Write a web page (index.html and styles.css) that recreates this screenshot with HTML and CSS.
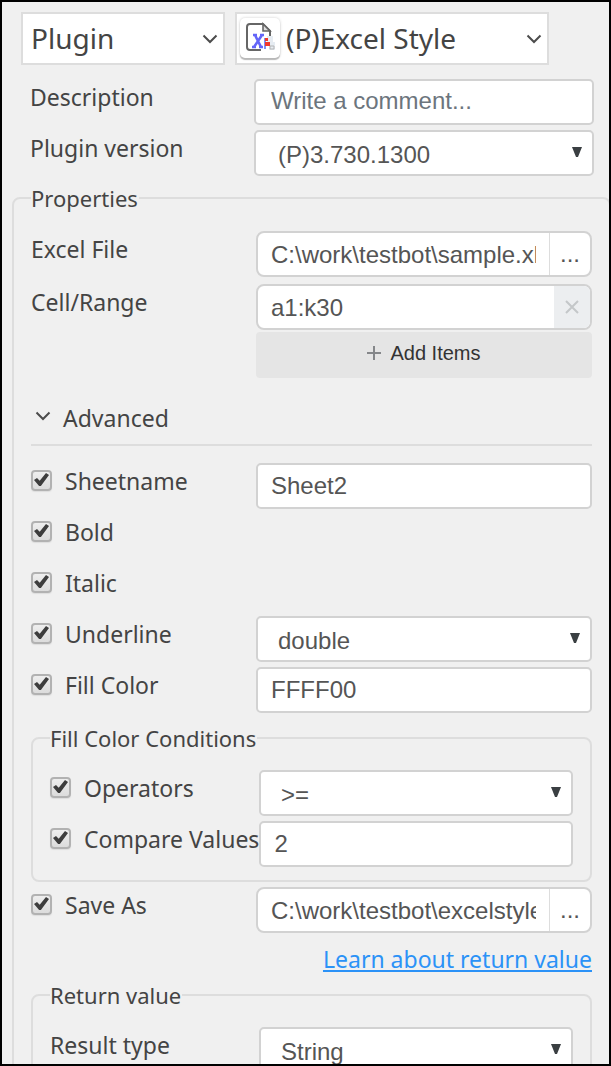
FILE: index.html
```html
<!DOCTYPE html>
<html lang="en">
<head>
<meta charset="utf-8">
<meta name="viewport" content="width=device-width, initial-scale=1">
<title>Excel Style plugin</title>
<link rel="stylesheet" href="styles.css">
</head>
<body>
<svg class="defs" aria-hidden="true">
  <symbol id="chevron" viewBox="0 0 16 10"><path d="M1.5 1.5 8 8l6.500-6.500" fill="none" stroke="#4c4c4c" stroke-width="2"/></symbol>
  <symbol id="triangle" viewBox="0 0 10 10"><path d="M0 0h10L6 10H4z" fill="#3a3f42"/></symbol>
</svg>
<main class="panel">
  <header class="picker">
    <div class="combo combo-type">
      <select class="combo-select" aria-label="Action type"><option>Plugin</option></select>
      <svg class="combo-chevron"><use href="#chevron"/></svg>
    </div>
    <div class="combo combo-plugin">
      <select class="combo-select combo-select-icon" aria-label="Plugin name"><option>(P)Excel Style</option></select>
      <span class="plugin-icon">
        <svg viewBox="0 0 30 30" width="30" height="30" aria-hidden="true">
          <path d="M16 28H5q-3 0-3-3V5q0-3 3-3h13l7 7v5" fill="none" stroke="#666" stroke-width="2"/>
          <path d="M18 2v7h7z" fill="#ddd" stroke="#666" stroke-width="1.6"/>
          <path d="M8 13h4M15 13h4M7 25h4M14 25h4M10 13l6 12M17 13 9 25" stroke="#6466f8" stroke-width="2.600" fill="none"/>
          <path d="M22 14h6v6h-6zM24 20h6v8h-6z" fill="#e6ecf2"/>
          <path d="M25 24h4v3h-4z" fill="none" stroke="#b4b4b4"/>
          <path d="M20 16v11" stroke="#7f90f5" stroke-width="2"/>
          <path d="M20 16h3v3h-3zM20 20h5v4h-5z" fill="#f0382c"/>
        </svg>
      </span>
      <svg class="combo-chevron"><use href="#chevron"/></svg>
    </div>
  </header>

  <form class="form">
    <div class="general">
      <div class="row">
        <label class="label" for="description">Description</label>
        <input class="field" id="description" type="text" placeholder="Write a comment...">
      </div>
      <div class="row">
        <label class="label" for="version">Plugin version</label>
        <div class="drop">
          <select class="field field-select" id="version"><option>(P)3.730.1300</option></select>
          <svg class="drop-arrow"><use href="#triangle"/></svg>
        </div>
      </div>
    </div>

    <fieldset class="group group-main">
      <legend class="legend">Properties</legend>
      <div class="row row-file">
        <label class="label" for="file">Excel File</label>
        <div class="joined">
          <input class="joined-input" id="file" type="text" value="C:\work\testbot\sample.xl">
          <button class="browse" type="button" aria-label="Browse Excel file">...</button>
        </div>
      </div>
      <div class="row">
        <label class="label" for="range">Cell/Range</label>
        <div class="stack">
          <div class="joined">
            <input class="joined-input" id="range" type="text" value="a1:k30">
            <button class="remove" type="button" aria-label="Remove item">
              <svg viewBox="0 0 14 14" width="14" height="14"><path d="M1 1l12 12M13 1 1 13" stroke="#c4c7c9" stroke-width="2"/></svg>
            </button>
          </div>
          <button class="add" type="button">
            <svg viewBox="0 0 14 14" width="14" height="14"><path d="M7 0v14M0 7h14" stroke="#85878a" stroke-width="2"/></svg>
            Add Items
          </button>
        </div>
      </div>

      <button class="advanced" type="button">
        <svg class="advanced-chevron"><use href="#chevron"/></svg>
        Advanced
      </button>

      <div class="row">
        <div class="check"><input class="box" id="c1" type="checkbox" checked><label for="c1">Sheetname</label></div>
        <input class="field" type="text" value="Sheet2" aria-label="Sheetname">
      </div>
      <div class="row">
        <div class="check"><input class="box" id="c2" type="checkbox" checked><label for="c2">Bold</label></div>
      </div>
      <div class="row">
        <div class="check"><input class="box" id="c3" type="checkbox" checked><label for="c3">Italic</label></div>
      </div>
      <div class="row">
        <div class="check"><input class="box" id="c4" type="checkbox" checked><label for="c4">Underline</label></div>
        <div class="drop">
          <select class="field field-select" aria-label="Underline"><option>double</option></select>
          <svg class="drop-arrow"><use href="#triangle"/></svg>
        </div>
      </div>
      <div class="row">
        <div class="check"><input class="box" id="c5" type="checkbox" checked><label for="c5">Fill Color</label></div>
        <input class="field" type="text" value="FFFF00" aria-label="Fill Color">
      </div>

      <fieldset class="group group-inner">
        <legend class="legend">Fill Color Conditions</legend>
        <div class="row">
          <div class="check"><input class="box" id="c6" type="checkbox" checked><label for="c6">Operators</label></div>
          <div class="drop">
            <select class="field field-select" aria-label="Operators"><option>&gt;=</option></select>
            <svg class="drop-arrow"><use href="#triangle"/></svg>
          </div>
        </div>
        <div class="row">
          <div class="check"><input class="box" id="c7" type="checkbox" checked><label for="c7">Compare Values</label></div>
          <input class="field" type="text" value="2" aria-label="Compare Values">
        </div>
      </fieldset>

      <div class="row">
        <div class="check"><input class="box" id="c8" type="checkbox" checked><label for="c8">Save As</label></div>
        <div class="joined">
          <input class="joined-input" type="text" value="C:\work\testbot\excelstyle" aria-label="Save As">
          <button class="browse" type="button" aria-label="Browse save location">...</button>
        </div>
      </div>

      <p class="help"><a class="help-link" href="#">Learn about return value</a></p>

      <fieldset class="group group-inner">
        <legend class="legend">Return value</legend>
        <div class="row">
          <label class="label" for="result">Result type</label>
          <div class="drop">
            <select class="field field-select" id="result"><option>String</option></select>
            <svg class="drop-arrow"><use href="#triangle"/></svg>
          </div>
        </div>
      </fieldset>
    </fieldset>
  </form>
</main>
</body>
</html>
```
FILE: styles.css
```css
* {
  box-sizing: border-box;
}

body {
  margin: 0;
  background: #f0f0f0;
  color: #444;
  font-family: "Noto Sans", "Open Sans", sans-serif;
  font-size: 23px;
  line-height: 30px;
}

.defs {
  display: none;
}

.panel {
  height: 100vh;
  overflow: hidden;
  border: 2px solid #000;
}

/* Header pickers */
.picker {
  display: flex;
  gap: 10px;
  padding: 10px 60px 0 19px;
}

.combo {
  position: relative;
}

.combo-type {
  flex: 204;
}

.combo-plugin {
  flex: 314;
}

.combo-select {
  appearance: none;
  display: block;
  width: 100%;
  height: 53px;
  padding: 0 36px 2px 8px;
  border: 2px solid #ddd;
  border-radius: 0;
  background: #fff;
  color: #444;
  font-family: inherit;
  font-size: 28px;
}

.combo-select-icon {
  padding-left: 49px;
}

.combo-chevron {
  position: absolute;
  top: 22px;
  right: 7px;
  width: 16px;
  height: 10px;
  pointer-events: none;
}

.plugin-icon {
  position: absolute;
  top: 6px;
  left: 5px;
  display: flex;
  padding: 4px 5px 6px;
  border-radius: 5px;
  background: #fff;
  box-shadow: 0 2px 1px #b8b8b8, 0 0 3px #ccc;
  pointer-events: none;
}

/* Form rows */
.general {
  padding: 14px 15px 0 28px;
}

.row {
  display: flex;
  align-items: flex-start;
  min-height: 46px;
  margin-bottom: 5px;
}

.row-file {
  margin-bottom: 7px;
}

.label,
.check {
  flex: 0 0 224px;
  padding-top: 3px;
  white-space: nowrap;
}

.group-main .label,
.group-main .check {
  flex-basis: 225px;
}

.group-main .group-inner .label,
.group-main .group-inner .check {
  flex-basis: 209px;
}

.check {
  display: flex;
  gap: 13px;
}

.box {
  appearance: none;
  flex: none;
  width: 21px;
  height: 21px;
  margin: 4px 0 0;
  border: 2px solid #b2b2b2;
  border-radius: 4px;
  background: linear-gradient(#eee, #dcdcdc);
  box-shadow: 0 1px 1px #ddd;
}

.box:checked::before {
  content: "";
  display: block;
  width: 15px;
  height: 14px;
  margin: 1px;
  background: #3d3d3d;
  clip-path: polygon(0 50%, 20% 36%, 38% 56%, 80% 0, 100% 14%, 46% 92%, 34% 92%);
}

.field {
  display: block;
  flex: 1;
  min-width: 0;
  width: 100%;
  height: 46px;
  padding: 0 15px 2px;
  border: 2px solid #d2d2d2;
  border-radius: 5px;
  background: #fff;
  color: #555;
  font-family: "Liberation Sans", Arial, sans-serif;
  font-size: 24px;
}

.group-main .field {
  padding: 0 13px;
}

.field::placeholder {
  color: #6c757d;
  opacity: 1;
}

.field-select {
  appearance: none;
  padding: 2px 36px 0 22px;
}

.group-main .field-select {
  padding: 3px 36px 0 20px;
}

.drop {
  position: relative;
  flex: 1;
  min-width: 0;
}

.drop-arrow {
  position: absolute;
  top: 17px;
  right: 12px;
  width: 10px;
  height: 10px;
  pointer-events: none;
}

.joined {
  display: flex;
  flex: 1;
  min-width: 0;
  height: 46px;
  overflow: hidden;
  border: 2px solid #d2d2d2;
  border-radius: 8px;
  background: #fff;
}

.joined-input {
  flex: 1;
  min-width: 0;
  padding: 2px 13px 0;
  border: 0;
  background: transparent;
  color: #555;
  font-family: "Liberation Sans", Arial, sans-serif;
  font-size: 24px;
}

.browse,
.remove {
  flex: none;
  padding: 0;
  border: 0;
  background: transparent;
}

.browse {
  width: 41px;
  border-left: 1px solid #ddd;
  color: #555;
  font-family: "Liberation Sans", Arial, sans-serif;
  font-size: 24px;
}

.remove {
  display: flex;
  align-items: center;
  justify-content: center;
  width: 36px;
  background: #eceef0;
}

.stack {
  display: flex;
  flex: 1;
  flex-direction: column;
  gap: 2px;
  min-width: 0;
}

.stack .joined {
  flex: none;
}

.add {
  display: flex;
  align-items: center;
  justify-content: center;
  gap: 9px;
  height: 46px;
  padding: 0 0 4px;
  border: 0;
  border-radius: 4px;
  background: #e5e5e5;
  color: #333;
  font-family: "Liberation Sans", Arial, sans-serif;
  font-size: 20px;
}

/* Groups */
.group {
  min-width: 0;
  margin: 0;
  border: 2px solid #ddd;
  border-radius: 8px;
}

.group-main {
  margin: 7px -2px 0 10px;
  padding: 18px 17px 0;
}

.group-inner {
  margin-top: 10px;
  margin-bottom: 5px;
  padding: 17px 17px 8px;
}

.legend {
  padding: 0 1px 0 0;
  font-size: 22px;
}

.advanced {
  display: flex;
  align-items: center;
  gap: 12px;
  width: 100%;
  margin-bottom: 17px;
  padding: 20px 4px 11px;
  border: 0;
  border-bottom: 2px solid #ddd;
  background: transparent;
  color: #444;
  font: inherit;
}

.advanced-chevron {
  width: 16px;
  height: 10px;
  margin-bottom: 4px;
}

.help {
  margin: 11px 0 6px;
  text-align: right;
}

.help + .group-inner {
  margin-top: 0;
}

.help-link {
  color: #2b92f7;
  text-decoration-thickness: 2px;
  text-underline-offset: 2px;
}
```
